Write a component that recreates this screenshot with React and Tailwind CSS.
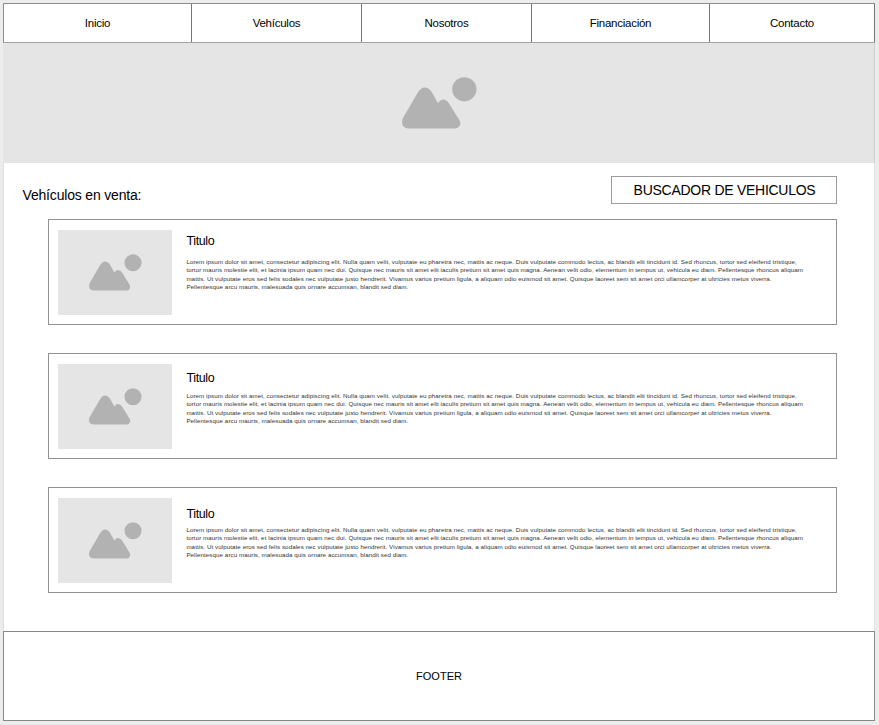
const navItems = [
  { label: 'Inicio', width: 'w-[188px]' },
  { label: 'Vehículos', width: 'w-[170px]' },
  { label: 'Nosotros', width: 'w-[170px]' },
  { label: 'Financiación', width: 'w-[178px]' },
  { label: 'Contacto', width: 'w-[165px]' },
];

const lines = [
  'Lorem ipsum dolor sit amet, consectetur adipiscing elit. Nulla quam velit, vulputate eu pharetra nec, mattis ac neque. Duis vulputate commodo lectus, ac blandit elit tincidunt id. Sed rhoncus, tortor sed eleifend tristique,',
  'tortor mauris molestie elit, et lacinia ipsum quam nec dui. Quisque nec mauris sit amet elit iaculis pretium sit amet quis magna. Aenean velit odio, elementum in tempus ut, vehicula eu diam. Pellentesque rhoncus aliquam',
  'mattis. Ut vulputate eros sed felis sodales nec vulputate justo hendrerit. Vivamus varius pretium ligula, a aliquam odio euismod sit amet. Quisque laoreet sem sit amet orci ullamcorper at ultricies metus viverra.',
  'Pellentesque arcu mauris, malesuada quis ornare accumsan, blandit sed diam.',
];

const cards = [
  { title: 'Titulo', titlePad: 'pt-[12px]', textGap: 'mt-[8px]', margin: 'mt-[14px]' },
  { title: 'Titulo', titlePad: 'pt-[15px]', textGap: 'mt-[5px]', margin: 'mt-[28px]' },
  { title: 'Titulo', titlePad: 'pt-[17px]', textGap: 'mt-[3px]', margin: 'mt-[28px]' },
];

function Landscape({ className }) {
  return (
    <svg viewBox="0 0 75 52" className={className} fill="#b2b2b2" aria-hidden="true">
      <path d="M1 41 L15.5 16 Q19 10.5 22.5 10.5 Q27 10.5 30 15.5 L35.8 26 Q38.5 22.5 41 22.5 Q44.5 22.5 47 26.5 L57.3 43 Q59.5 46.5 57.3 49.3 Q56 51.5 53 51.5 L7 51.5 Q2.5 51.5 .8 48.5 Q-.8 44.5 1 41 Z" />
      <circle cx="62.3" cy="12.3" r="12.1" />
    </svg>
  );
}

function Card({ title, titlePad, textGap, margin }) {
  return (
    <article className={`ml-[45px] flex h-[106px] w-[789px] shrink-0 border border-[#929292] ${margin}`}>
      <div className="mt-[10px] ml-[9px] flex h-[85px] w-[114px] shrink-0 items-center justify-center bg-[#e5e5e5]">
        <Landscape className="h-[37px] w-[53px]" />
      </div>
      <div className={`ml-[14.4px] ${titlePad}`}>
        <h2 className="text-[12.5px] leading-[18px] tracking-[-0.35px] text-black">{title}</h2>
        <div className={`text-[6.2px] leading-[8.3px] tracking-[0.075px] whitespace-nowrap text-[#333333] ${textGap}`}>
          {lines.map((line) => (
            <p key={line}>{line}</p>
          ))}
        </div>
      </div>
    </article>
  );
}

export default function App() {
  return (
    <div className="h-[725px] w-[879px] overflow-hidden bg-[#ececec] pt-[3px] pl-[3px] font-['Liberation_Sans',Arial,sans-serif]">
      <div className="flex h-[718px] w-[872px] flex-col bg-white">
        <nav className="flex h-[40px] shrink-0 border-y border-l border-t-[#8c8c8c] border-b-[#a2a2a2] border-l-[#8c8c8c]">
          {navItems.map((item) => (
            <a key={item.label} className={`flex shrink-0 items-center justify-center border-r border-[#777777] pt-[2px] text-[11.5px] tracking-[-0.25px] text-black ${item.width}`}>
              {item.label}
            </a>
          ))}
        </nav>
        <div className="flex h-[120px] shrink-0 items-center justify-center border-r border-[#d0d0d0] bg-[#e5e5e5] pl-[2px]">
          <Landscape className="h-[52px] w-[75px]" />
        </div>
        <main className="flex h-[468px] shrink-0 flex-col border-x border-r-[#e5e5e5] border-l-[#dedede]">
          <div className="-ml-px flex shrink-0 justify-between pt-[13px] pr-[37px] pl-[19.5px]">
            <h1 className="pt-[9px] text-[14px] leading-[20px] tracking-[-0.18px]">Vehículos en venta:</h1>
            <div className="flex h-[28px] w-[226px] items-center justify-center border border-[#9c9c9c] pl-px text-[14px] tracking-[-0.27px]">BUSCADOR DE VEHICULOS</div>
          </div>
          <div className="-mt-px -ml-px flex flex-col pt-px">
            {cards.map((card, i) => (
              <Card key={i} {...card} />
            ))}
          </div>
        </main>
        <footer className="flex h-[90px] shrink-0 items-center justify-center border border-[#888888] text-[11px]">FOOTER</footer>
      </div>
    </div>
  );
}
